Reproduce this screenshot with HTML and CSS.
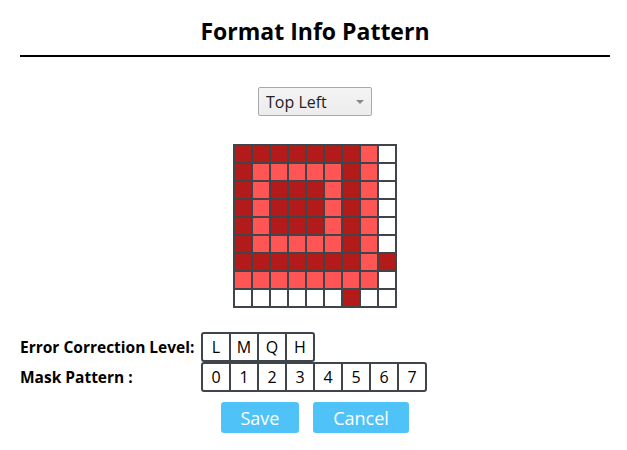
FILE: index.html
```html
<!DOCTYPE html>
<html>
<head>
<meta charset="utf-8">
<link rel="stylesheet" href="styles.css">
</head>
<body>
<div class="page">
  <h1 class="title">Format Info Pattern</h1>
  <div class="rule"></div>
  <div class="select-row">
    <div class="select"><span>Top Left</span><span class="caret"></span></div>
  </div>
  <div class="grid-row">
    <div class="grid">
      <div class="c d"></div><div class="c d"></div><div class="c d"></div><div class="c d"></div><div class="c d"></div><div class="c d"></div><div class="c d"></div><div class="c l"></div><div class="c w"></div>
      <div class="c d"></div><div class="c l"></div><div class="c l"></div><div class="c l"></div><div class="c l"></div><div class="c l"></div><div class="c d"></div><div class="c l"></div><div class="c w"></div>
      <div class="c d"></div><div class="c l"></div><div class="c d"></div><div class="c d"></div><div class="c d"></div><div class="c l"></div><div class="c d"></div><div class="c l"></div><div class="c w"></div>
      <div class="c d"></div><div class="c l"></div><div class="c d"></div><div class="c d"></div><div class="c d"></div><div class="c l"></div><div class="c d"></div><div class="c l"></div><div class="c w"></div>
      <div class="c d"></div><div class="c l"></div><div class="c d"></div><div class="c d"></div><div class="c d"></div><div class="c l"></div><div class="c d"></div><div class="c l"></div><div class="c w"></div>
      <div class="c d"></div><div class="c l"></div><div class="c l"></div><div class="c l"></div><div class="c l"></div><div class="c l"></div><div class="c d"></div><div class="c l"></div><div class="c w"></div>
      <div class="c d"></div><div class="c d"></div><div class="c d"></div><div class="c d"></div><div class="c d"></div><div class="c d"></div><div class="c d"></div><div class="c l"></div><div class="c d"></div>
      <div class="c l"></div><div class="c l"></div><div class="c l"></div><div class="c l"></div><div class="c l"></div><div class="c l"></div><div class="c l"></div><div class="c l"></div><div class="c w"></div>
      <div class="c w"></div><div class="c w"></div><div class="c w"></div><div class="c w"></div><div class="c w"></div><div class="c w"></div><div class="c d"></div><div class="c w"></div><div class="c w"></div>
    </div>
  </div>
  <div class="form">
    <div class="label">Error Correction Level:</div>
    <div class="group">
      <span class="opt">L</span><span class="opt">M</span><span class="opt">Q</span><span class="opt">H</span>
    </div>
    <div class="label">Mask Pattern :</div>
    <div class="group">
      <span class="opt">0</span><span class="opt">1</span><span class="opt">2</span><span class="opt">3</span><span class="opt">4</span><span class="opt">5</span><span class="opt">6</span><span class="opt">7</span>
    </div>
  </div>
  <div class="actions">
    <button class="btn save">Save</button>
    <button class="btn cancel">Cancel</button>
  </div>
</div>
</body>
</html>
```
FILE: styles.css
```css
html, body {
  margin: 0;
  padding: 0;
  background: #ffffff;
}
body {
  font-family: "Open Sans", "Noto Sans", sans-serif;
  color: #000;
}
.page {
  width: 590px;
  margin-left: 20px;
  padding-top: 16px;
}
.title {
  margin: 0;
  font-size: 23px;
  font-weight: 700;
  line-height: 30px;
  text-align: center;
}
.rule {
  margin-top: 9px;
  height: 2px;
  background: #000;
}
.select-row {
  display: flex;
  justify-content: center;
  margin-top: 30px;
}
.select {
  height: 27px;
  border: 1px solid #a9a9a9;
  border-radius: 2px;
  background: linear-gradient(#f4f4f4, #ececec);
  display: flex;
  align-items: center;
  justify-content: space-between;
  padding: 0 7px 0 7px;
  box-sizing: content-box;
  width: 98px;
  font-size: 16px;
  color: #222;
}
.caret {
  width: 0;
  height: 0;
  border-left: 4px solid transparent;
  border-right: 4px solid transparent;
  border-top: 4px solid #888;
  margin-top: 1px;
}
.grid-row {
  display: flex;
  justify-content: center;
  margin-top: 28px;
}
.grid {
  display: grid;
  grid-template-columns: repeat(9, 16px);
  grid-auto-rows: 16px;
  gap: 2px;
  padding: 2px;
  background: #40444b;
}
.c.d { background: #b31b1b; }
.c.l { background: #ff5555; }
.c.w { background: #ffffff; }
.form {
  display: grid;
  grid-template-columns: 181px auto;
  margin-top: 24px;
  align-items: center;
}
.label {
  font-size: 15.5px;
  font-weight: 700;
  line-height: 30px;
  white-space: nowrap;
}
.group {
  display: flex;
  justify-self: start;
  border: 2px solid #40444b;
  border-radius: 3px;
}
.opt {
  width: 26px;
  height: 26px;
  line-height: 26px;
  text-align: center;
  font-size: 16px;
  color: #000;
}
.opt + .opt {
  border-left: 2px solid #40444b;
}
.actions {
  display: flex;
  justify-content: center;
  gap: 14px;
  margin-top: 10px;
}
.btn {
  font-family: "Open Sans", "Noto Sans", sans-serif;
  font-size: 18px;
  color: #fff;
  background: #4fc3f7;
  border: none;
  border-radius: 3px;
  height: 31px;
  padding: 0;
}
.save { width: 78px; }
.cancel { width: 96px; }
```
